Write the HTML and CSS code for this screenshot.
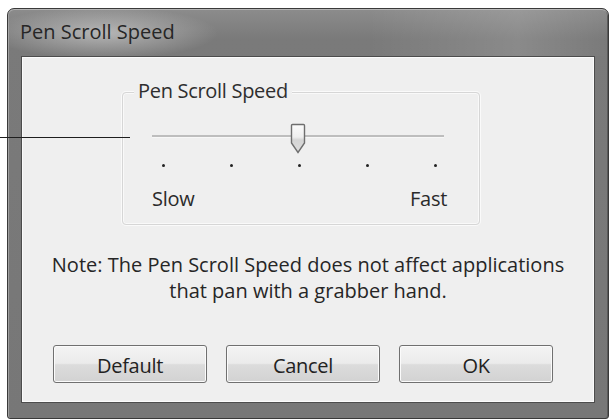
FILE: index.html
```html
<!DOCTYPE html>
<html lang="en">
<head>
    <meta charset="UTF-8">
    <title>Pen Scroll Speed</title>
    <link rel="stylesheet" href="styles.css">
</head>
<body>
    <div class="window">
        <div class="title-bar">
            <span class="title">Pen Scroll Speed</span>
        </div>
        <div class="client">
            <div class="group">
                <span class="group-label">Pen Scroll Speed</span>
                <div class="slider">
                    <div class="track"></div>
                    <svg class="thumb" style="left: 138px;" width="16" height="31" viewBox="0 0 16 31">
                        <defs>
                            <linearGradient id="thumbFill" x1="0" y1="0" x2="0" y2="1">
                                <stop offset="0" stop-color="#fbfbfb"/>
                                <stop offset="0.45" stop-color="#eeeeee"/>
                                <stop offset="0.55" stop-color="#d4d4d4"/>
                                <stop offset="1" stop-color="#dcdcdc"/>
                            </linearGradient>
                        </defs>
                        <path d="M2.5 1.5 H13.5 Q14.5 1.5 14.5 2.5 V20 L8 29.5 L1.5 20 V2.5 Q1.5 1.5 2.5 1.5 Z" fill="url(#thumbFill)" stroke="#6e6e6e" stroke-width="1.4"/>
                    </svg>
                </div>
                <div class="ticks">
                    <span class="dot"></span>
                    <span class="dot"></span>
                    <span class="dot"></span>
                    <span class="dot"></span>
                    <span class="dot"></span>
                </div>
                <div class="labels">
                    <span>Slow</span>
                    <span>Fast</span>
                </div>
            </div>
            <p class="note">Note: The Pen Scroll Speed does not affect applications<br>that pan with a grabber hand.</p>
            <div class="buttons">
                <button class="btn">Default</button>
                <button class="btn">Cancel</button>
                <button class="btn">OK</button>
            </div>
        </div>
    </div>
    <!-- callout line from the manual -->
    <div class="callout"></div>
</body>
</html>
```

FILE: styles.css
```css
body {
    margin: 0;
    background-color: #ffffff;
    font-family: "Open Sans", "Noto Sans", sans-serif;
    color: #2a2a2a;
}
.window {
    margin: 8px 3px 0 7px;
    width: 600px;
    height: 409px;
    border: 1px solid #3a3a3a;
    border-radius: 7px 7px 3px 3px;
    background: linear-gradient(to bottom, #8c8c8c, #7a7a7a 30px, #777777);
    display: flex;
    flex-direction: column;
    box-shadow: inset 0 1px 0 #b4b4b4, inset 1px 0 0 #a0a0a0, inset -1px 0 0 #5a5a5a;
}
.title-bar {
    height: 47px;
    display: flex;
    align-items: center;
    padding-left: 12px;
    background: radial-gradient(ellipse 115px 26px at 95px 24px, rgba(220, 220, 220, 0.6), rgba(220, 220, 220, 0) 100%),
                linear-gradient(to right, rgba(0, 0, 0, 0) 60%, rgba(255, 255, 255, 0.12) 85%, rgba(0, 0, 0, 0) 100%);
}
.title {
    font-size: 20px;
    color: #262626;
    margin-top: -2px;
}
.client {
    flex: 1;
    margin: 0 13px 15px 13px;
    background-color: #efefef;
    border: 1px solid #4c4c4c;
    box-shadow: inset 0 0 0 1px #fbfbfb;
    display: flex;
    flex-direction: column;
}
.group {
    position: relative;
    margin: 35px 0 0 100px;
    width: 356px;
    height: 131px;
    border: 1px solid #d6d6d6;
    border-radius: 4px;
    box-shadow: inset 0 0 0 1px #f9f9f9, 0 0 0 1px #fafafa;
}
.group-label {
    position: absolute;
    top: -14px;
    left: 11px;
    padding: 0 4px;
    font-size: 20px;
    letter-spacing: -0.3px;
    line-height: 24px;
    background-color: #efefef;
    color: #2e2e2e;
}
.slider {
    position: relative;
    margin: 30px 0 0 29px;
    width: 292px;
    height: 31px;
}
.track {
    position: absolute;
    top: 12px;
    left: 0;
    right: 0;
    height: 2px;
    background-color: #bdbdbd;
    border-bottom: 1px solid #f7f7f7;
}
.thumb {
    position: absolute;
    top: 0;
}
.ticks {
    display: flex;
    justify-content: space-between;
    margin: 10px 0 0 39px;
    width: 275px;
}
.dot {
    width: 3px;
    height: 3px;
    border-radius: 50%;
    background-color: #222222;
}
.labels {
    display: flex;
    justify-content: space-between;
    margin: 20px 0 0 29px;
    width: 295px;
    font-size: 20px;
    letter-spacing: -0.3px;
    line-height: 24px;
}
.note {
    margin: 27px 0 0 0;
    text-align: center;
    font-size: 20px;
    line-height: 26px;
    color: #262626;
}
.buttons {
    display: flex;
    gap: 19px;
    margin: 41px 0 0 31px;
}
.btn {
    width: 154px;
    height: 38px;
    border: 1px solid #707070;
    border-radius: 3px;
    background: linear-gradient(to bottom, #f4f4f4, #ebebeb 48%, #dcdcdc 52%, #d2d2d2);
    box-shadow: inset 0 0 0 1px #fbfbfb;
    font-family: "Open Sans", "Noto Sans", sans-serif;
    font-size: 20px;
    letter-spacing: -0.3px;
    color: #222222;
    padding: 2px 0 0 0;
}
.callout {
    position: absolute;
    top: 137px;
    left: 0;
    width: 130px;
    height: 1px;
    background-color: #1e1e1e;
}
```
